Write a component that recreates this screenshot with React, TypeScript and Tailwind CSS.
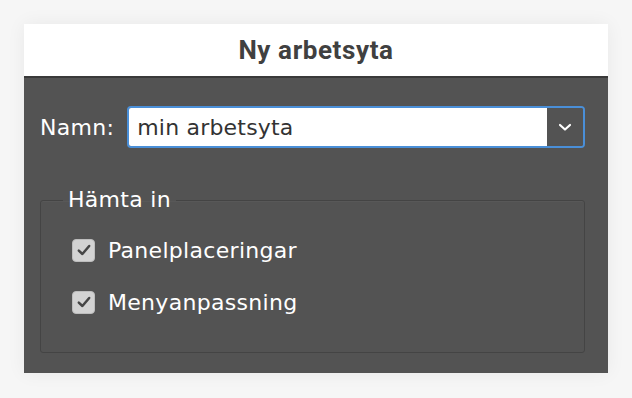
import React, { useState } from "react";

const bodyFont = { fontFamily: '"DejaVu Sans", Verdana, sans-serif' };

const CheckRow: React.FC<{ label: string }> = ({ label }) => {
  const [checked, setChecked] = useState(true);
  return (
    <label className="flex items-center gap-[13px] h-[26px] cursor-default">
      <span
        onClick={() => setChecked(!checked)}
        className="w-[23px] h-[23px] rounded-[4px] bg-[#d3d3d3] border border-[#bdbdbd] flex items-center justify-center"
      >
        {checked && (
          <svg width="16" height="16" viewBox="0 0 16 16">
            <path
              d="M2.8 8.6 L6.4 12 L13.2 4"
              fill="none"
              stroke="#454545"
              strokeWidth="2.5"
              strokeLinecap="round"
              strokeLinejoin="round"
            />
          </svg>
        )}
      </span>
      <span className="text-[22px] text-white tracking-[0.3px]">{label}</span>
    </label>
  );
};

export default function App() {
  const [name, setName] = useState("min arbetsyta");

  return (
    <div className="w-[632px] h-[398px] bg-[#f6f6f6] pt-6 pl-6" style={bodyFont}>
      <div className="w-[584px] h-[349px] flex flex-col shadow-[0_0_18px_rgba(0,0,0,0.06)]">
        <div className="h-[52px] bg-white flex items-center justify-center">
          <span
            className="text-[26px] font-bold text-[#404040] tracking-[0.6px]"
            style={{ fontFamily: "Roboto, Inter, sans-serif" }}
          >
            Ny arbetsyta
          </span>
        </div>

        <div className="flex-1 bg-[#535353] border-t-2 border-[#3a3a3a] pl-4 pr-[23px] pt-7">
          <div className="flex items-center gap-[13px]">
            <span className="text-[22px] text-white tracking-[0.3px]">Namn:</span>
            <div className="flex-1 h-[42px] flex border-2 border-[#4a8fd8] rounded-[4px] overflow-hidden">
              <input
                value={name}
                onChange={(e) => setName(e.target.value)}
                className="flex-1 min-w-0 bg-white pl-2 text-[22px] text-[#333] outline-none tracking-[0.2px]"
                style={bodyFont}
              />
              <div className="w-[36px] bg-[#535353] flex items-center justify-center">
                <svg width="14" height="10" viewBox="0 0 14 10">
                  <path
                    d="M2 3 L7 7.5 L12 3"
                    fill="none"
                    stroke="#ffffff"
                    strokeWidth="2.2"
                    strokeLinecap="round"
                    strokeLinejoin="round"
                  />
                </svg>
              </div>
            </div>
          </div>

          <fieldset className="mt-[39px] border border-[#444444] rounded-[3px] shadow-[inset_0_1px_0_rgba(255,255,255,0.03)]">
            <legend className="ml-[22px] px-[5px] text-[22px] leading-[26px] text-white tracking-[0.3px]">
              Hämta in
            </legend>
            <div className="flex flex-col gap-[26px] pl-[31px] pt-[24px] pb-[37px]">
              <CheckRow label="Panelplaceringar" />
              <CheckRow label="Menyanpassning" />
            </div>
          </fieldset>
        </div>
      </div>
    </div>
  );
}
